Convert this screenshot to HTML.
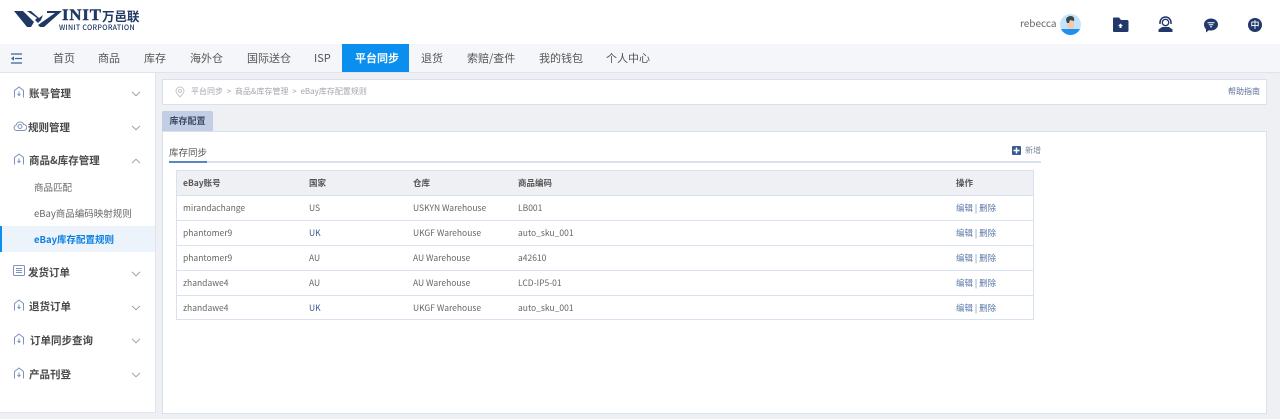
<!DOCTYPE html>
<html lang="zh"><head><meta charset="utf-8">
<style>
*{box-sizing:border-box}
html,body{margin:0;padding:0;width:1280px;height:419px;overflow:hidden;background:#eff0f4;font-family:"Noto Sans CJK SC","Liberation Sans",sans-serif;color:#555}
.a{position:absolute;white-space:nowrap}
.nav{font-size:11px;color:#555;top:50px;line-height:16px}
.m{left:29px;font-size:10.500px;font-weight:700;color:#4a4a4a;line-height:16px;margin-top:1px}
.s{font-size:9.500px;color:#666;line-height:14px;left:34px}
.c{font-size:8.500px;color:#666;line-height:12px}
.h{font-size:8.500px;font-weight:700;color:#555;line-height:12px}
.l{position:absolute;left:176px;width:858px;height:1px;background:#d8e1ee}
.o{font-size:8.500px;color:#5a7aa8;line-height:12px;left:956px}
</style></head><body>
<div class="a" style="left:0;top:0;width:1280px;height:44px;background:#fff"></div>
<svg class="a" style="left:0;top:0" width="70" height="32" viewBox="0 0 70 32">
<path fill="#1f3864" d="M14 11h9l11 11-3 5h-4zM27 11h4l8 7 4-3-2 5-3 3-3-3 2-2zM62 11H47v2h8L38 25l2 2h4z"/>
</svg>
<div class="a" style="left:62px;top:7px;font:bold 16px/18px 'Liberation Serif',serif;color:#1f3864;letter-spacing:.8px;-webkit-text-stroke:.4px #1f3864;transform:scaleX(1.05);transform-origin:left">INIT</div>
<div class="a" style="left:102px;top:7px;font-size:12.500px;line-height:18px;font-weight:700;color:#1f3864">万邑联</div>
<div class="a" style="left:59px;top:23px;font-size:7px;line-height:10px;font-weight:500;color:#1f3864;letter-spacing:.3px">WINIT CORPORATION</div>
<div class="a" style="left:1020px;top:16px;font-size:10px;line-height:14px;color:#666">rebecca</div>
<svg class="a" style="left:1060px;top:14px" width="21" height="21" viewBox="0 0 21 21">
<circle cx="10.500" cy="10.500" r="10.500" fill="#c4e4fb"/>
<path fill="#f6c9ae" d="M7 5h7v8l-1 3H9l-2-3z"/>
<path fill="#37474f" d="M6 6c0-3 3-4 5-4s4 2 3 5l-4-1-1 3-2 0z"/>
<path fill="#1f8ff0" d="M1 15h19a10.500 10.500 0 0 1-19 0z"/>
</svg>
<svg class="a" style="left:1112px;top:17px" width="17" height="16" viewBox="0 0 17 16">
<path fill="#22386a" d="M1 1.500a1 1 0 0 1 1-1h5l2 2.500h6a1.500 1.500 0 0 1 1.500 1.500v9a1.500 1.500 0 0 1-1.500 1.500H2a1 1 0 0 1-1-1z"/>
<path fill="#fff" d="M8.500 6.500l2.500 2.500h-1.500v2h-2v-2H6z"/>
</svg>
<svg class="a" style="left:1158px;top:16px" width="15" height="16" viewBox="0 0 15 16">
<path fill="none" stroke="#22386a" stroke-width="1.500" d="M2 8V6.500a5.500 5.500 0 0 1 11 0V8"/>
<circle cx="7.500" cy="6.500" r="3.200" fill="none" stroke="#22386a" stroke-width="1.300"/>
<path fill="#22386a" d="M4 11h7l3.500 2.500V16H.5v-2.500z"/>
</svg>
<svg class="a" style="left:1203px;top:18px" width="16" height="15" viewBox="0 0 16 15">
<path fill="#22386a" d="M8 .5c4 0 7 2.600 7 6s-3 6-7 6c-.8 0-1.500-.1-2.200-.3L3 14.500v-3.300C1.800 10 1 8.400 1 6.500c0-3.400 3-6 7-6z"/>
<path stroke="#fff" stroke-width="1" d="M4.500 4.800h7M5.800 6.800h4.400M7 8.800h2"/>
</svg>
<svg class="a" style="left:1248px;top:18px" width="14" height="14" viewBox="0 0 14 14"><circle cx="7" cy="7" r="7" fill="#22386a"/></svg>
<div class="a" style="left:1248px;top:18px;width:14px;text-align:center;font-size:9px;line-height:14px;color:#fff;font-weight:500">中</div>

<div class="a" style="left:0;top:44px;width:1280px;height:29px;background:#f5f6f9;border-bottom:1px solid #dfe3eb"></div>
<svg class="a" style="left:11px;top:53px" width="12" height="11" viewBox="0 0 12 11">
<path stroke="#3f5f96" stroke-width="1.200" fill="none" d="M0 1h11M4 5.500h7M0 10h11"/><path fill="#3f5f96" d="M0 5.500l3-2.200v4.400z"/></svg>
<div class="a" style="left:342px;top:44px;width:67px;height:28px;background:#0a8fee"></div>
<div class="a nav" style="left:53px">首页</div>
<div class="a nav" style="left:98px">商品</div>
<div class="a nav" style="left:144px">库存</div>
<div class="a nav" style="left:190px">海外仓</div>
<div class="a nav" style="left:247px">国际送仓</div>
<div class="a nav" style="left:314px">ISP</div>
<div class="a nav" style="left:355px;color:#fff;font-weight:700">平台同步</div>
<div class="a nav" style="left:421px">退货</div>
<div class="a nav" style="left:467px">索赔/查件</div>
<div class="a nav" style="left:539px">我的钱包</div>
<div class="a nav" style="left:606px">个人中心</div>

<div class="a" style="left:0;top:73px;width:156px;height:340px;background:#fff;border-right:1px solid #dfe5ef;border-bottom:1px solid #dfe5ef"></div>
<div class="a" style="left:0;top:226px;width:155px;height:26px;background:#edf3fb"></div>
<div class="a" style="left:0;top:226px;width:2px;height:26px;background:#0a8fee"></div>

<svg width="0" height="0" style="position:absolute"><defs>
<symbol id="hm" viewBox="0 0 12 12"><path fill="none" stroke="#7d93bd" stroke-width="1" d="M1.500 11.500V4.500L6 1l4.500 3.500v7"/><path fill="none" stroke="#7d93bd" stroke-width="1" d="M6 5.500v4M4.500 8L6 9.500 7.500 8"/></symbol>
<symbol id="cv" viewBox="0 0 10 6"><path fill="none" stroke="#9aa0a8" stroke-width="1" d="M1 .8l4 4 4-4"/></symbol>
</defs></svg>

<svg class="a" style="left:13px;top:86px" width="12" height="12"><use href="#hm"/></svg>
<div class="a m" style="top:85px">账号管理</div>
<svg class="a" style="left:131px;top:91px" width="10" height="6"><use href="#cv"/></svg>

<svg class="a" style="left:13px;top:120px" width="14" height="12" viewBox="0 0 14 12"><path fill="none" stroke="#7d93bd" d="M3.500 10.500a2.700 2.700 0 0 1-.4-5.300A4 4 0 0 1 10.700 4.500a3 3 0 0 1 0 6z"/><circle cx="7" cy="6.500" r="2" fill="none" stroke="#7d93bd"/></svg>
<div class="a m" style="top:119px;left:28px">规则管理</div>
<svg class="a" style="left:131px;top:125px" width="10" height="6"><use href="#cv"/></svg>

<svg class="a" style="left:13px;top:153px" width="12" height="12"><use href="#hm"/></svg>
<div class="a m" style="top:152px">商品&amp;库存管理</div>
<svg class="a" style="left:131px;top:158px;transform:rotate(180deg)" width="10" height="6"><use href="#cv"/></svg>

<div class="a s" style="top:180px">商品匹配</div>
<div class="a s" style="top:206px">eBay商品编码映射规则</div>
<div class="a s" style="top:232px;color:#0a7fe0;font-weight:700">eBay库存配置规则</div>

<svg class="a" style="left:13px;top:265px" width="12" height="12" viewBox="0 0 12 12"><rect x=".5" y=".5" width="11" height="10" rx="1" fill="none" stroke="#7d93bd"/><path stroke="#7d93bd" d="M3 3.500h6M3 5.500h6M3 7.500h6"/></svg>
<div class="a m" style="top:264px;left:28px">发货订单</div>
<svg class="a" style="left:131px;top:271px" width="10" height="6"><use href="#cv"/></svg>

<svg class="a" style="left:13px;top:299px" width="12" height="12"><use href="#hm"/></svg>
<div class="a m" style="top:298px">退货订单</div>
<svg class="a" style="left:131px;top:305px" width="10" height="6"><use href="#cv"/></svg>

<svg class="a" style="left:13px;top:333px" width="12" height="12"><use href="#hm"/></svg>
<div class="a m" style="top:332px;left:30px">订单同步查询</div>
<svg class="a" style="left:131px;top:338px" width="10" height="6"><use href="#cv"/></svg>

<svg class="a" style="left:13px;top:367px" width="12" height="12"><use href="#hm"/></svg>
<div class="a m" style="top:366px">产品刊登</div>
<svg class="a" style="left:131px;top:372px" width="10" height="6"><use href="#cv"/></svg>

<div class="a" style="left:162px;top:79px;width:1105px;height:26px;background:#fff;border:1px solid #d8e1ee"></div>
<svg class="a" style="left:175px;top:86px" width="10" height="12" viewBox="0 0 10 12"><path fill="none" stroke="#c4c8ce" d="M5 11C2.500 8.500 1 6.800 1 5a4 4 0 0 1 8 0c0 1.800-1.500 3.500-4 6z"/><circle cx="5" cy="5" r="1.500" fill="none" stroke="#c4c8ce"/></svg>
<div class="a" style="left:191px;top:86px;font-size:8px;line-height:12px;color:#a2a6ac;word-spacing:2px">平台同步 &gt; 商品&amp;库存管理 &gt; eBay库存配置规则</div>
<div class="a" style="left:1228px;top:86px;font-size:8px;line-height:12px;color:#5a7196">帮助指南</div>

<div class="a" style="left:162px;top:111px;width:51px;height:21px;background:#c3cde3;border-radius:2px 2px 0 0;text-align:center;font-size:9px;font-weight:700;line-height:20px;color:#3b4a66">库存配置</div>
<div class="a" style="left:162px;top:131px;width:1105px;height:283px;background:#fff;border:1px solid #d8e1ee"></div>

<div class="a" style="left:169px;top:146px;font-size:9.500px;line-height:12px;color:#555">库存同步</div>
<div class="a" style="left:169px;top:161px;width:872px;height:2px;background:#d8e1ee"></div>
<div class="a" style="left:169px;top:161px;width:38px;height:2px;background:#5b86c4"></div>
<svg class="a" style="left:1012px;top:146px" width="9" height="9" viewBox="0 0 9 9"><rect width="9" height="9" rx="1" fill="#3a5a90"/><path stroke="#fff" stroke-width="1.500" d="M4.500 1.500v6M1.500 4.500h6"/></svg>
<div class="a" style="left:1025px;top:145px;font-size:8px;line-height:12px;color:#7b8796">新增</div>

<div class="a" style="left:176px;top:170px;width:858px;height:150px;background:#fff;border:1px solid #d8e1ee"></div>
<div class="a" style="left:177px;top:171px;width:856px;height:24px;background:#eff0f4"></div>
<div class="l" style="top:195px"></div><div class="l" style="top:220px"></div><div class="l" style="top:245px"></div><div class="l" style="top:270px"></div><div class="l" style="top:295px"></div>

<div class="a h" style="left:183px;top:177px">eBay账号</div>
<div class="a h" style="left:309px;top:177px">国家</div>
<div class="a h" style="left:413px;top:177px">仓库</div>
<div class="a h" style="left:518px;top:177px">商品编码</div>
<div class="a h" style="left:956px;top:177px">操作</div>

<div class="a c" style="left:183px;top:202px">mirandachange</div><div class="a c" style="left:309px;top:202px">US</div><div class="a c" style="left:413px;top:202px">USKYN Warehouse</div><div class="a c" style="left:518px;top:202px">LB001</div><div class="a o" style="top:202px">编辑 | 删除</div>
<div class="a c" style="left:183px;top:227px">phantomer9</div><div class="a c" style="left:309px;top:227px;color:#3a5a90">UK</div><div class="a c" style="left:413px;top:227px">UKGF Warehouse</div><div class="a c" style="left:518px;top:227px">auto_sku_001</div><div class="a o" style="top:227px">编辑 | 删除</div>
<div class="a c" style="left:183px;top:252px">phantomer9</div><div class="a c" style="left:309px;top:252px">AU</div><div class="a c" style="left:413px;top:252px">AU Warehouse</div><div class="a c" style="left:518px;top:252px">a42610</div><div class="a o" style="top:252px">编辑 | 删除</div>
<div class="a c" style="left:183px;top:277px">zhandawe4</div><div class="a c" style="left:309px;top:277px">AU</div><div class="a c" style="left:413px;top:277px">AU Warehouse</div><div class="a c" style="left:518px;top:277px">LCD-IP5-01</div><div class="a o" style="top:277px">编辑 | 删除</div>
<div class="a c" style="left:183px;top:302px">zhandawe4</div><div class="a c" style="left:309px;top:302px;color:#3a5a90">UK</div><div class="a c" style="left:413px;top:302px">UKGF Warehouse</div><div class="a c" style="left:518px;top:302px">auto_sku_001</div><div class="a o" style="top:302px">编辑 | 删除</div>
</body></html>
